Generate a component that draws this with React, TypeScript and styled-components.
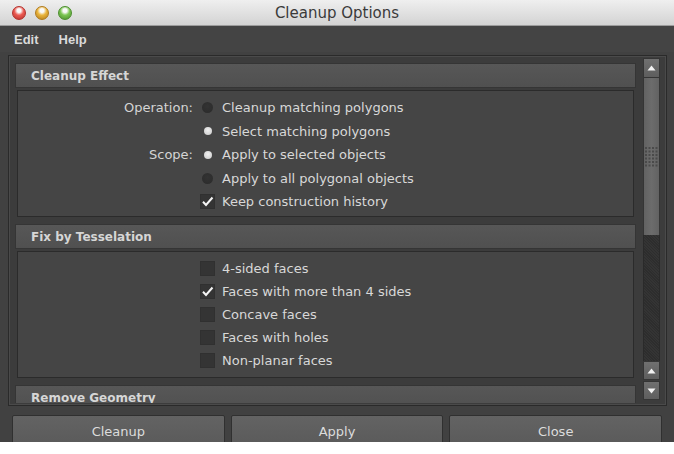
import React from "react";
import styled, { createGlobalStyle } from "styled-components";

const Global = createGlobalStyle`
  html, body { margin: 0; padding: 0; background: #ffffff; }
  body { width: 674px; height: 454px; overflow: hidden; font-family: "DejaVu Sans", "Liberation Sans", sans-serif; }
`;

const Window = styled.div`
  width: 674px;
  height: 442px;
  overflow: hidden;
  background: #414141;
  display: flex;
  flex-direction: column;
`;

const TitleBar = styled.div`
  height: 26px;
  box-sizing: border-box;
  flex: none;
  display: grid;
  grid-template-columns: 1fr auto 1fr;
  align-items: center;
  background: linear-gradient(#efefef, #d3d3d3);
  border-bottom: 1px solid #9c9c9c;
`;

const Lights = styled.div`
  display: flex;
  gap: 9px;
  padding-left: 12px;
`;

const Light = styled.span<{ $c: string; $d: string }>`
  width: 14px;
  height: 14px;
  border-radius: 50%;
  box-sizing: border-box;
  background: radial-gradient(circle at 50% 30%, #ffffffcc 0 18%, ${(p) => p.$c} 45%, ${(p) => p.$d} 100%);
  border: 1px solid ${(p) => p.$d};
`;

const Title = styled.div`
  font-size: 15px;
  color: #3a3a3a;
  padding-top: 1px;
`;

const MenuBar = styled.div`
  height: 26px;
  flex: none;
  display: flex;
  align-items: center;
  gap: 20px;
  padding-left: 14px;
  background: #444444;
`;

const MenuItem = styled.span`
  font-family: "Liberation Sans", Arial, sans-serif;
  font-weight: bold;
  font-size: 13px;
  color: #dadada;
`;

const Main = styled.div`
  flex: none;
  padding: 3px 7px 0 8px;
`;

const ScrollFrame = styled.div`
  height: 351px;
  box-sizing: border-box;
  display: flex;
  background: #3c3c3c;
  border: 1px solid #2a2a2a;
  box-shadow: inset 0 0 0 1px #4a4a4a;
`;

const ScrollContent = styled.div`
  flex: 1;
  overflow: hidden;
  margin-bottom: 2px;
  padding: 7px 2px 0 6px;
  display: flex;
  flex-direction: column;
  gap: 7px;
`;

const SectionBox = styled.div`
  display: flex;
  flex-direction: column;
  gap: 2px;
  flex: none;
`;

const SectionHeader = styled.div`
  height: 25px;
  box-sizing: border-box;
  display: flex;
  align-items: center;
  padding-left: 15px;
  padding-top: 1px;
  background: linear-gradient(#575757, #505050);
  border: 1px solid #353535;
  font-weight: bold;
  font-size: 12px;
  color: #d6d6d6;
`;

const SectionBody = styled.div<{ $row: number }>`
  height: 127px;
  box-sizing: border-box;
  margin: 0 2px;
  padding-top: 5px;
  background: #454545;
  border: 1px solid #2b2b2b;
  display: grid;
  grid-template-columns: 175px 15px 1fr;
  grid-auto-rows: ${(p) => p.$row}px;
  column-gap: 7px;
  align-items: center;
`;

const Label = styled.span`
  justify-self: end;
  font-size: 13px;
  color: #d4d4d4;
`;

const Control = styled.span`
  display: flex;
  align-items: center;
  justify-content: center;
  width: 15px;
  height: 15px;
`;

const RadioDot = styled.span<{ $on: boolean }>`
  border-radius: 50%;
  width: ${(p) => (p.$on ? 8 : 11)}px;
  height: ${(p) => (p.$on ? 8 : 11)}px;
  background: ${(p) => (p.$on ? "radial-gradient(circle at 50% 40%, #f0f0f0, #c8c8c8)" : "radial-gradient(circle at 50% 40%, #333333, #2a2a2a)")};
`;

const CheckBox = styled.span`
  width: 15px;
  height: 15px;
  box-sizing: border-box;
  background: #343434;
  border: 1px solid #303030;
  display: flex;
  align-items: center;
  justify-content: center;
`;

const OptionText = styled.span`
  font-size: 13px;
  color: #d8d8d8;
  white-space: nowrap;
`;

const ScrollCol = styled.div`
  width: 28px;
  flex: none;
  box-sizing: border-box;
  padding: 2px 6px 5px 5px;
  display: flex;
  flex-direction: column;
`;

const ArrowBtn = styled.div<{ $h: number; $mt?: number }>`
  height: ${(p) => p.$h}px;
  flex: none;
  margin-top: ${(p) => p.$mt ?? 0}px;
  background: linear-gradient(#707070, #5e5e5e);
  border: 1px solid #353535;
  box-sizing: border-box;
  display: flex;
  align-items: center;
  justify-content: center;
`;

const Thumb = styled.div`
  height: 157px;
  flex: none;
  background: linear-gradient(90deg, #626262, #6c6c6c 50%, #626262);
  border-left: 1px solid #353535;
  border-right: 1px solid #353535;
  box-sizing: border-box;
  display: flex;
  align-items: center;
  justify-content: center;
`;

const Track = styled.div`
  flex: 1;
  background: repeating-linear-gradient(45deg, #343434 0 1px, #2d2d2d 1px 2px);
  border-left: 1px solid #2a2a2a;
  border-right: 1px solid #2a2a2a;
`;

const ButtonRow = styled.div`
  display: flex;
  gap: 6px;
  padding: 9px 12px 0 12px;
`;

const Button = styled.div`
  flex: 1;
  height: 32px;
  box-sizing: border-box;
  background: linear-gradient(#636363, #5a5a5a);
  border: 1px solid #303030;
  border-radius: 2px;
  display: flex;
  align-items: center;
  justify-content: center;
  font-size: 13px;
  color: #dcdcdc;
`;

const Check = () => (
  <svg width="13" height="13" viewBox="0 0 13 13">
    <path d="M2 6.8 L5 10 L11.5 2.5" fill="none" stroke="#f4f4f4" strokeWidth="2" />
  </svg>
);

const Tri = ({ up }: { up: boolean }) => (
  <svg width="9" height="6" viewBox="0 0 9 6">
    <path d={up ? "M0.5 5.5 L4.5 0.5 L8.5 5.5 Z" : "M0.5 0.5 L4.5 5.5 L8.5 0.5 Z"} fill="#f2f2f2" />
  </svg>
);

const Grip = () => {
  const dots: React.ReactNode[] = [];
  for (let r = 0; r < 6; r++)
    for (let c = 0; c < 4; c++)
      dots.push(<rect key={`${r}-${c}`} x={c * 3.5} y={r * 3.5} width="2" height="2" fill="#4a4a4a" />);
  return (
    <svg width="13" height="20" viewBox="0 0 13 20">
      {dots}
    </svg>
  );
};

type Row = { label?: string; kind: "radio" | "check"; on: boolean; text: string };

const Section = ({ title, rows, rowH }: { title: string; rows: Row[]; rowH: number }) => (
  <SectionBox>
    <SectionHeader>{title}</SectionHeader>
    <SectionBody $row={rowH}>
      {rows.map((r, i) => (
        <React.Fragment key={i}>
          <Label>{r.label ?? ""}</Label>
          <Control>
            {r.kind === "radio" ? <RadioDot $on={r.on} /> : <CheckBox>{r.on ? <Check /> : null}</CheckBox>}
          </Control>
          <OptionText>{r.text}</OptionText>
        </React.Fragment>
      ))}
    </SectionBody>
  </SectionBox>
);

const effectRows: Row[] = [
  { label: "Operation:", kind: "radio", on: false, text: "Cleanup matching polygons" },
  { kind: "radio", on: true, text: "Select matching polygons" },
  { label: "Scope:", kind: "radio", on: true, text: "Apply to selected objects" },
  { kind: "radio", on: false, text: "Apply to all polygonal objects" },
  { kind: "check", on: true, text: "Keep construction history" },
];

const tessRows: Row[] = [
  { kind: "check", on: false, text: "4-sided faces" },
  { kind: "check", on: true, text: "Faces with more than 4 sides" },
  { kind: "check", on: false, text: "Concave faces" },
  { kind: "check", on: false, text: "Faces with holes" },
  { kind: "check", on: false, text: "Non-planar faces" },
];

export default function App() {
  return (
    <>
      <Global />
      <Window>
        <TitleBar>
          <Lights>
            <Light $c="#ec5b53" $d="#b3302b" />
            <Light $c="#eab53c" $d="#b07a1c" />
            <Light $c="#7cc653" $d="#4a8d2c" />
          </Lights>
          <Title>Cleanup Options</Title>
          <span />
        </TitleBar>
        <MenuBar>
          <MenuItem>Edit</MenuItem>
          <MenuItem>Help</MenuItem>
        </MenuBar>
        <Main>
          <ScrollFrame>
            <ScrollContent>
              <Section title="Cleanup Effect" rows={effectRows} rowH={23.5} />
              <Section title="Fix by Tesselation" rows={tessRows} rowH={23} />
              <SectionBox>
                <SectionHeader>Remove Geometry</SectionHeader>
              </SectionBox>
            </ScrollContent>
            <ScrollCol>
              <ArrowBtn $h={20}>
                <Tri up />
              </ArrowBtn>
              <Thumb>
                <Grip />
              </Thumb>
              <Track />
              <ArrowBtn $h={19}>
                <Tri up />
              </ArrowBtn>
              <ArrowBtn $h={19} $mt={1}>
                <Tri up={false} />
              </ArrowBtn>
            </ScrollCol>
          </ScrollFrame>
        </Main>
        <ButtonRow>
          <Button>Cleanup</Button>
          <Button>Apply</Button>
          <Button>Close</Button>
        </ButtonRow>
      </Window>
    </>
  );
}
